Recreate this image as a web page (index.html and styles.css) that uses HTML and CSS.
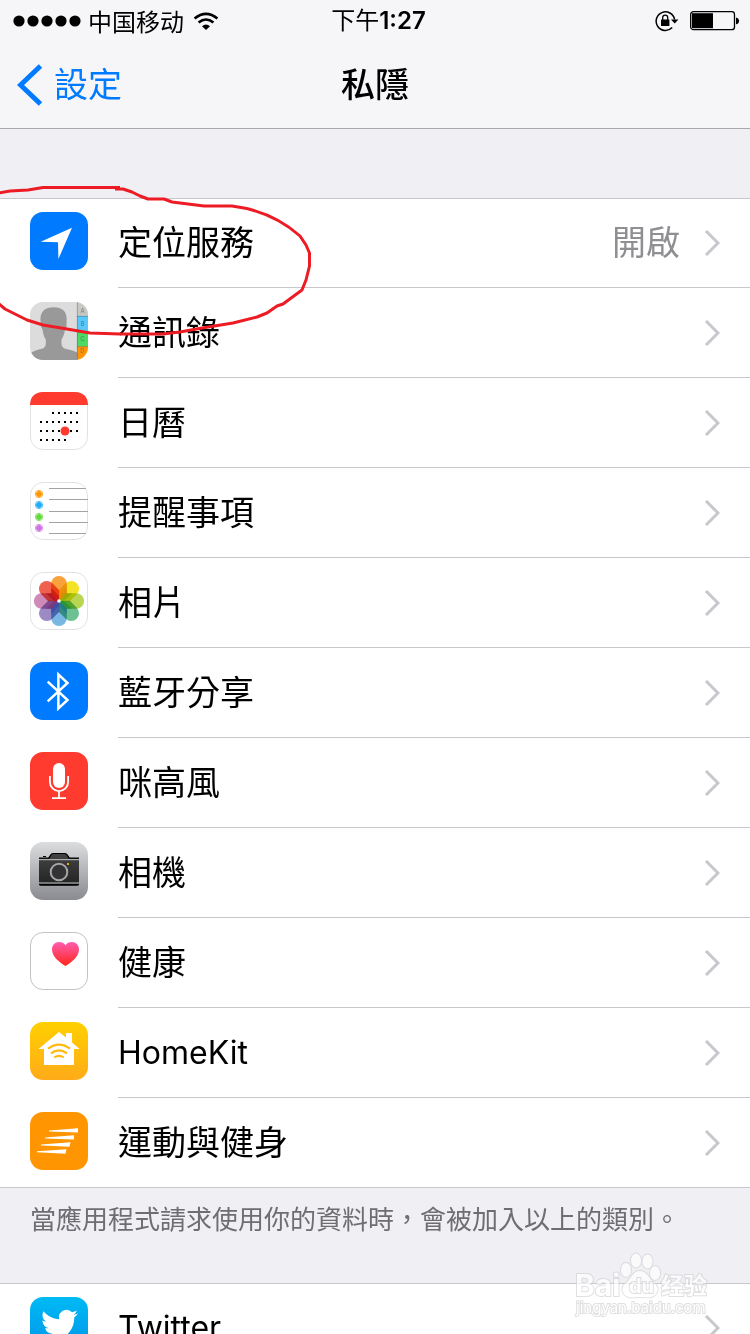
FILE: index.html
```html
<!DOCTYPE html>
<html lang="zh-Hant">
<head>
<meta charset="utf-8">
<meta name="viewport" content="width=device-width">
<title>私隱</title>
<link rel="stylesheet" href="styles.css">
</head>
<body>
<div class="screen">
  <header class="header">
    <div class="status">
      <div class="status-left">
        <svg class="signal" width="68" height="12" viewBox="0 0 68 12" aria-hidden="true"><circle cx="6" cy="6" r="5.6"/><circle cx="20" cy="6" r="5.6"/><circle cx="34" cy="6" r="5.6"/><circle cx="48" cy="6" r="5.6"/><circle cx="62" cy="6" r="5.6"/></svg>
        <span class="carrier" lang="zh-Hans">中国移动</span>
        <svg class="wifi" width="26" height="18" viewBox="0 0 26 18" aria-hidden="true"><g fill="none" stroke="#000" stroke-width="2.6"><path d="M1.6 6.6Q13-2.8 24.4 6.6"/><path d="M5.6 10.6Q13 4.4 20.4 10.6"/></g><path d="M9 14.2Q13 10.6 17 14.2L13 18Z"/></svg>
      </div>
      <time class="clock">下午<span class="digits">1:27</span></time>
      <div class="status-right">
        <svg width="24" height="22" viewBox="0 0 24 22" aria-hidden="true"><path d="M17.2 17.6A9.3 9.3 0 1 1 19.6 9.5" fill="none" stroke="#000" stroke-width="1.5"/><path d="M16 9.5h7.4L19.7 13.5Z"/><rect x="6" y="9.5" width="8.4" height="6.5" rx=".6"/><path d="M7.7 10V7.6a2.5 2.5 0 0 1 5 0V10" fill="none" stroke="#000" stroke-width="1.3"/></svg>
        <svg width="50" height="20" viewBox="0 0 50 20" aria-hidden="true"><rect x=".7" y=".7" width="43.8" height="18" rx="2.8" fill="none" stroke="#000" stroke-width="1.3"/><rect x="2" y="2.2" width="21" height="15"/><path d="M46 6.5q3 .6 3 3.4t-3 3.4Z"/></svg>
      </div>
    </div>
    <nav class="nav">
      <a class="back" href="#settings"><svg width="26" height="42" viewBox="0 0 26 42" aria-hidden="true"><path d="M23.5 2 3.5 21l20 19" fill="none" stroke="#007aff" stroke-width="5"/></svg><span>設定</span></a>
      <h1 class="title">私隱</h1>
    </nav>
  </header>

  <main class="content">
    <ul class="list">
      <li><a class="row" href="#location">
        <svg class="icon" viewBox="0 0 58 58" aria-hidden="true"><rect width="58" height="58" rx="13" fill="#007aff"/><path d="M10.7 29.7 42 15.7 28.4 47 28 30.2Z" fill="#fff"/></svg>
        <span class="body"><span class="label">定位服務</span><span class="value">開啟</span><svg class="chevron" viewBox="0 0 16 26" aria-hidden="true"><path d="m2 1 12 12L2 25"/></svg></span></a></li>
      <li><a class="row" href="#contacts">
        <svg class="icon" viewBox="0 0 58 58" aria-hidden="true">
          <defs><clipPath id="tile"><rect width="58" height="58" rx="13"/></clipPath></defs>
          <g clip-path="url(#tile)"><rect width="58" height="58" fill="#dcdcdc"/>
          <path d="M1 58V51C5 48 10 47.500 13 46.500 16 45 16 42 15.700 37.500 14 35 13 31 12.600 28L11.200 25 10.500 19C10 11 13 5.200 24 5.200 33 5.200 37 10 36.700 18L36.500 25 35 27C34.500 32 33 35 31.500 37.500 31.300 42 31.500 45 34.500 46.500 38 47.500 43 48 47 50.500V58Z" fill="#999"/>
          <rect x="47" width="11" height="14" fill="#c8c7c2"/><rect x="47" y="14" width="11" height="15.500" fill="#5ac8fa"/><rect x="47" y="29.500" width="11" height="15" fill="#4cd964"/><rect x="47" y="44.500" width="11" height="14" fill="#ff9500"/>
          <path d="M47.300 0v58M47 14.300h11M47 29.500h11M47 44.600h11" stroke="#000" stroke-opacity=".28" stroke-width=".8"/>
          <g class="tab-letters"><text x="52.500" y="11">A</text><text x="52.500" y="24">B</text><text x="52.500" y="39">C</text><text x="52.500" y="51">D</text></g></g></svg>
        <span class="body"><span class="label">通訊錄</span><svg class="chevron" viewBox="0 0 16 26" aria-hidden="true"><path d="m2 1 12 12L2 25"/></svg></span></a></li>
      <li><a class="row" href="#calendar">
        <svg class="icon" viewBox="0 0 58 58" aria-hidden="true"><rect x=".5" y=".5" width="57" height="57" rx="12.500" fill="#fff" stroke="#e2e2e2"/><path d="M0 13C0 5 5 0 13 0h32c8 0 13 5 13 13Z" fill="#ff3b30"/>
          <path d="M22 21h27M10 30h40M10 39h40M10 48h27" stroke="#000" stroke-width="2" stroke-dasharray="2 4"/><circle cx="35" cy="39" r="4.500" fill="#ff3b30"/></svg>
        <span class="body"><span class="label">日曆</span><svg class="chevron" viewBox="0 0 16 26" aria-hidden="true"><path d="m2 1 12 12L2 25"/></svg></span></a></li>
      <li><a class="row" href="#reminders">
        <svg class="icon" viewBox="0 0 58 58" aria-hidden="true"><rect x=".5" y=".5" width="57" height="57" rx="12.500" fill="#fff" stroke="#e2e2e2"/><path d="M19 6.500h37M19 17.500h39M19 29.500h39M19 40.500h39M19 51.500h37" stroke="#a3a3a3"/>
          <g fill="#ff9500" stroke="#ff9500"><circle cx="9" cy="12" r="2.500"/><circle cx="9" cy="12" r="3.700" fill="none" stroke-opacity=".75"/></g>
          <g fill="#1badf8" stroke="#1badf8"><circle cx="9" cy="23" r="2.500"/><circle cx="9" cy="23" r="3.700" fill="none" stroke-opacity=".75"/></g>
          <g fill="#63da38" stroke="#63da38"><circle cx="9" cy="35" r="2.500"/><circle cx="9" cy="35" r="3.700" fill="none" stroke-opacity=".75"/></g>
          <g fill="#cc73e1" stroke="#cc73e1"><circle cx="9" cy="46" r="2.500"/><circle cx="9" cy="46" r="3.700" fill="none" stroke-opacity=".75"/></g></svg>
        <span class="body"><span class="label">提醒事項</span><svg class="chevron" viewBox="0 0 16 26" aria-hidden="true"><path d="m2 1 12 12L2 25"/></svg></span></a></li>
      <li><a class="row" href="#photos">
        <svg class="icon" viewBox="0 0 58 58" aria-hidden="true"><rect x=".5" y=".5" width="57" height="57" rx="12.500" fill="#fff" stroke="#e2e2e2"/>
          <defs><path id="petal" d="M21.200 11.700a7.800 7.800 0 0 1 15.600 0V21.500L29 29 21.200 21.500Z"/></defs>
          <g class="petals"><use href="#petal" fill="#f9a13a"/><use href="#petal" fill="#f3e326" transform="rotate(45 29 29)"/><use href="#petal" fill="#b8d652" transform="rotate(90 29 29)"/><use href="#petal" fill="#6cc193" transform="rotate(135 29 29)"/><use href="#petal" fill="#78b8e2" transform="rotate(180 29 29)"/><use href="#petal" fill="#9b8ac4" transform="rotate(225 29 29)"/><use href="#petal" fill="#ce8ab8" transform="rotate(270 29 29)"/><use href="#petal" fill="#f0604e" transform="rotate(315 29 29)"/></g>
          <g class="folds"><path d="M29 29 21.200 21.400V16L29 24ZM29 29 21.400 21.200H16L24 29Z" fill="#b80012"/><path d="M29 29 36.800 21.400V16L29 24Z" fill="#d08a00"/><path d="M29 29 36.600 21.200H42L34 29Z" fill="#7aa000"/><path d="M29 29 36.600 36.800H42L34 29Z" fill="#0f8a3c"/><path d="M29 29 36.800 36.600V42L29 34Z" fill="#14708a"/><path d="M29 29 21.200 36.600V42L29 34Z" fill="#33409a"/><path d="M29 29 21.400 36.800H16L24 29Z" fill="#7a2878"/></g>
          <circle cx="29" cy="29" r="1.800" fill="#fff"/></svg>
        <span class="body"><span class="label">相片</span><svg class="chevron" viewBox="0 0 16 26" aria-hidden="true"><path d="m2 1 12 12L2 25"/></svg></span></a></li>
      <li><a class="row" href="#bluetooth">
        <svg class="icon" viewBox="0 0 58 58" aria-hidden="true"><rect width="58" height="58" rx="13" fill="#007aff"/><path d="M17.700 19.700 37.500 38 28.400 46.300V12.300L37.500 21 17.700 39.300" fill="none" stroke="#fff" stroke-width="2.500"/></svg>
        <span class="body"><span class="label">藍牙分享</span><svg class="chevron" viewBox="0 0 16 26" aria-hidden="true"><path d="m2 1 12 12L2 25"/></svg></span></a></li>
      <li><a class="row" href="#microphone">
        <svg class="icon" viewBox="0 0 58 58" aria-hidden="true"><rect width="58" height="58" rx="13" fill="#ff3b30"/><rect x="23" y="11" width="12" height="25" rx="6" fill="#fff"/><path d="M19.900 24v6a9.100 9.100 0 0 0 18.200 0v-6M29 39v7M22 46.200h14" fill="none" stroke="#fff" stroke-width="1.800"/></svg>
        <span class="body"><span class="label">咪高風</span><svg class="chevron" viewBox="0 0 16 26" aria-hidden="true"><path d="m2 1 12 12L2 25"/></svg></span></a></li>
      <li><a class="row" href="#camera">
        <svg class="icon" viewBox="0 0 58 58" aria-hidden="true"><defs><linearGradient id="metal" x2="0" y2="1"><stop stop-color="#dbddde"/><stop offset="1" stop-color="#898b91"/></linearGradient><linearGradient id="leather" x2="0" y2="1"><stop stop-color="#444"/><stop offset="1" stop-color="#222"/></linearGradient></defs><rect width="58" height="58" rx="13" fill="url(#metal)"/>
          <path d="M9 16h9c2-1 2-5 5-5h12c3 0 3 4 5 5h9v26q0 2-2 2H11q-2 0-2-2Z" fill="url(#leather)"/><path d="M9 16.200h9.500c2-1.200 2-4.700 4.500-4.700h12c2.500 0 2.500 3.500 4.500 4.700H49M9 42.500h40M13 14.500h3" fill="none" stroke="#000" stroke-width="1.200"/><path d="M9 17.700h40M9 41h40" stroke="#c5c7ca" stroke-width="1"/>
          <circle cx="29" cy="30" r="9.500" fill="#292929"/><circle cx="29" cy="30" r="8.300" fill="#333" stroke="#a4a6aa" stroke-width="2"/><rect x="37" y="21" width="2" height="2" fill="#f5a800"/></svg>
        <span class="body"><span class="label">相機</span><svg class="chevron" viewBox="0 0 16 26" aria-hidden="true"><path d="m2 1 12 12L2 25"/></svg></span></a></li>
      <li><a class="row" href="#health">
        <svg class="icon" viewBox="0 0 58 58" aria-hidden="true"><defs><linearGradient id="heart" x2="0" y2="1"><stop stop-color="#ff5db1"/><stop offset="1" stop-color="#ff2719"/></linearGradient></defs><rect x=".5" y=".5" width="57" height="57" rx="12.500" fill="#fff" stroke="#c3c3c5"/><path d="M35.500 34C29 30 22 24.500 22 17.500 22 13 25 10 29 10c3 0 5 1 6.500 3.200C37 11 39 10 42 10c4 0 7 3 7 7.500C49 24.500 42 30 35.500 34Z" fill="url(#heart)"/></svg>
        <span class="body"><span class="label">健康</span><svg class="chevron" viewBox="0 0 16 26" aria-hidden="true"><path d="m2 1 12 12L2 25"/></svg></span></a></li>
      <li><a class="row" href="#homekit">
        <svg class="icon" viewBox="0 0 58 58" aria-hidden="true"><defs><linearGradient id="amber" x2="0" y2="1"><stop stop-color="#ffd000"/><stop offset="1" stop-color="#ffab18"/></linearGradient></defs><rect width="58" height="58" rx="13" fill="url(#amber)"/><path d="M29 10l7 5.500V11h6v9.500L49.500 27H44v16H14V27H8.500Z" fill="#fff"/><path d="M18 26.600Q29 18.500 40 26.600M21 31.300Q29 25.500 37 31.300M24.300 35.400Q29 32.500 33.700 35.400" fill="none" stroke="#ffb911" stroke-width="2.200"/></svg>
        <span class="body"><span class="label latin">HomeKit</span><svg class="chevron" viewBox="0 0 16 26" aria-hidden="true"><path d="m2 1 12 12L2 25"/></svg></span></a></li>
      <li><a class="row" href="#motion">
        <svg class="icon" viewBox="0 0 58 58" aria-hidden="true"><rect width="58" height="58" rx="13" fill="#ff9500"/><path d="M19 18.500 48 16.300V20.500L19 19.400ZM15 25.400 44 23.300V27.500L15 26.400ZM11 32.400 40.500 30.300 39.500 34.700 11 33.400ZM7 39.300 36.500 37.300 35.500 41.700 7 40.300Z" fill="#fff"/></svg>
        <span class="body"><span class="label">運動與健身</span><svg class="chevron" viewBox="0 0 16 26" aria-hidden="true"><path d="m2 1 12 12L2 25"/></svg></span></a></li>
    </ul>
    <p class="note">當應用程式請求使用你的資料時，會被加入以上的類別。</p>
    <ul class="list">
      <li><a class="row" href="#twitter">
        <svg class="icon" viewBox="0 0 58 58" aria-hidden="true"><defs><linearGradient id="sky" x2="0" y2="1"><stop stop-color="#00baf4"/><stop offset="1" stop-color="#0092e8"/></linearGradient></defs><rect width="58" height="58" rx="13" fill="url(#sky)"/><path transform="translate(11 9.500) scale(1.540)" fill="#fff" d="M23.953 4.570a10 10 0 0 1-2.825.775 4.958 4.958 0 0 0 2.163-2.723c-.951.555-2.005.959-3.127 1.184a4.920 4.920 0 0 0-8.384 4.482C7.690 8.095 4.067 6.130 1.640 3.162a4.822 4.822 0 0 0-.666 2.475c0 1.710.870 3.213 2.188 4.096a4.904 4.904 0 0 1-2.228-.616v.060a4.923 4.923 0 0 0 3.946 4.827 4.996 4.996 0 0 1-2.212.085 4.936 4.936 0 0 0 4.604 3.417 9.867 9.867 0 0 1-6.102 2.105c-.390 0-.779-.023-1.170-.067a13.995 13.995 0 0 0 7.557 2.209c9.053 0 13.998-7.496 13.998-13.985 0-.210 0-.420-.015-.630A9.935 9.935 0 0 0 24 4.590z"/></svg>
        <span class="body"><span class="label latin">Twitter</span><svg class="chevron" viewBox="0 0 16 26" aria-hidden="true"><path d="m2 1 12 12L2 25"/></svg></span></a></li>
    </ul>
  </main>

  <svg class="marker" width="320" height="350" viewBox="0 0 320 350" aria-hidden="true"><path d="M-2 193 10 191 28 190 43 187.500H120M115 189h8l9 3 8 4 8 3h16l8 3 32 4h28C256 209 281 219 300 236L306 245 309.500 253V266L306 280 302 290 283 304 277 306 267 313 257 317 233 323 202 328 180 332 163 334H120L90 333 67 329 43 325 27 320 5 309-2 303"/></svg>

  <svg class="watermark" width="144" height="72" viewBox="0 0 144 72">
    <g class="mark"><text class="mark-name" x="5" y="46">Bai</text>
    <path d="M70 21c7 0 8 6 13 11 5 4 6 8 3 12-4 5-9 3-16 3s-12 2-16-3c-3-4-2-8 3-12 5-5 6-11 13-11Z"/><ellipse cx="56" cy="20" rx="5" ry="7"/><ellipse cx="66" cy="10.500" rx="5" ry="7"/><ellipse cx="77.500" cy="11.500" rx="5" ry="7"/><ellipse cx="85" cy="23" rx="5" ry="7"/>
    <text class="mark-du" x="59" y="43">du</text><text class="mark-cjk" x="91" y="44" lang="zh-Hans">经验</text><text class="mark-url" x="6" y="63">jingyan.baidu.com</text></g>
  </svg>
</div>
</body>
</html>
```

FILE: styles.css
```css
* { box-sizing: border-box; }

body {
  margin: 0;
  background: #efeff4;
  color: #000;
  font-family: Inter, "Noto Sans CJK TC", sans-serif;
}

a { color: inherit; text-decoration: none; }
svg { display: block; flex-shrink: 0; }

.screen {
  position: relative;
  display: flex;
  flex-direction: column;
  height: 100vh;
  overflow: hidden;
}

.header {
  background: #f6f6f8;
  border-bottom: 1px solid #a9a9ac;
}

.status {
  display: grid;
  grid-template-columns: 1fr auto 1fr;
  align-items: center;
  height: 41px;
  padding: 0 10px 0 13px;
  font-size: 24px;
  line-height: 40px;
}

.status-left { display: flex; align-items: center; }
.carrier { margin: 0 9px 0 7px; font-family: "Noto Sans CJK SC", sans-serif; }
.clock { padding-left: 4px; }
.digits { font-weight: 600; }
.status-right { display: flex; align-items: center; justify-content: flex-end; gap: 11px; }

.nav {
  display: grid;
  grid-template-columns: 1fr auto 1fr;
  align-items: center;
  height: 87px;
  padding: 0 17px;
  font-size: 34px;
  line-height: 48px;
}

.back { display: flex; align-items: center; gap: 11px; color: #007aff; }
.title { margin: 0; font-size: 34px; font-weight: 500; }

.content {
  flex: 1;
  min-height: 0;
  padding-top: 69px;
  overflow-y: auto;
  scrollbar-width: none;
}

.list {
  margin: 0;
  padding: 0;
  list-style: none;
  background: #fff;
  border-bottom: 1px solid #c8c7cc;
  box-shadow: inset 0 1px #c8c7cc;
}

.row { display: flex; padding-left: 30px; }
.icon { width: 58px; height: 58px; margin: 14px 30px 17px 0; }

.body {
  display: flex;
  flex: 1;
  align-items: center;
  padding-right: 30px;
  font-size: 34px;
  line-height: 48px;
}

.list li + li .body { box-shadow: 0 -1px #c8c7cc; }
.list li + li { padding-top: 1px; }

.label { flex: 1; }
.latin { font-size: 32px; }
.value { color: #8e8e93; }

.chevron {
  width: 16px;
  height: 26px;
  margin-left: 24px;
  fill: none;
  stroke: #c7c7cc;
  stroke-width: 3px;
}

.note {
  margin: 0;
  padding: 13px 30px 44px;
  color: #6d6d72;
  font-size: 26px;
  line-height: 38px;
}

.tab-letters { fill: #555; font-size: 6px; text-anchor: middle; opacity: .7; }
.petals { isolation: isolate; }
.petals use { mix-blend-mode: multiply; }
.folds { opacity: .5; }

.marker {
  position: absolute;
  top: 0;
  left: 0;
  fill: none;
  stroke: #ed1c24;
  stroke-width: 3px;
  stroke-linejoin: round;
  pointer-events: none;
}

.watermark {
  position: absolute;
  right: 36px;
  bottom: 12px;
  pointer-events: none;
}

.mark { fill: #fff; stroke: #d3d3d6; stroke-width: 2px; paint-order: stroke; opacity: .7; }
.mark-name { font-size: 30px; font-weight: 700; }
.mark-du { font-size: 20px; font-weight: 700; }
.mark-cjk { font-family: "Noto Sans CJK SC", sans-serif; font-size: 23px; font-weight: 700; }
.mark-url { font-size: 15px; }
```
